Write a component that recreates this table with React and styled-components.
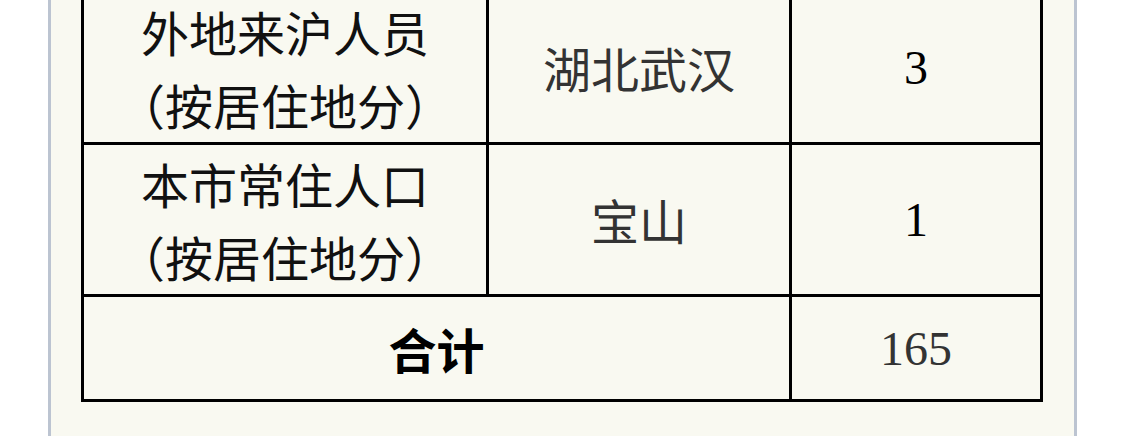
import React from "react";
import styled, { createGlobalStyle } from "styled-components";

const GlobalStyle = createGlobalStyle`
  html, body {
    margin: 0;
    padding: 0;
    background: #ffffff;
    overflow: hidden;
  }
  body {
    font-family: "Noto Sans CJK SC", "Noto Sans", sans-serif;
  }
`;

const Panel = styled.div`
  box-sizing: border-box;
  width: 1029px;
  margin: -40px 0 0 48px;
  padding: 30px 31px 60px 30px;
  background: #f9f9f1;
  border-left: 3px solid #bcc4d1;
  border-right: 3px solid #bcc4d1;
`;

const Grid = styled.div`
  display: grid;
  grid-template-columns: 405px 303px 251px;
  grid-auto-rows: auto;
  width: 962px;
  box-sizing: border-box;
  border-left: 3px solid #000;
  border-top: 3px solid #000;
`;

const Cell = styled.div`
  box-sizing: border-box;
  height: ${(p) => p.$h}px;
  grid-column: span ${(p) => p.$span || 1};
  border-right: 3px solid #000;
  border-bottom: 3px solid #000;
  display: flex;
  align-items: center;
  justify-content: center;
  text-align: center;
  font-size: 48px;
  line-height: 73px;
  color: ${(p) => p.$color || "#111"};
  font-weight: ${(p) => (p.$bold ? 700 : 400)};
  font-family: ${(p) =>
    p.$serif
      ? `"Liberation Serif", "Times New Roman", serif`
      : `"Noto Sans CJK SC", "Noto Sans", sans-serif`};
`;

const rows = [
  {
    category: ["外地来沪人员", "（按居住地分）"],
    place: "湖北武汉",
    count: "3",
    h: 152,
  },
  {
    category: ["本市常住人口", "（按居住地分）"],
    place: "宝山",
    count: "1",
    h: 152,
  },
];

export default function App() {
  return (
    <>
      <GlobalStyle />
      <Panel>
        <Grid>
          {rows.map((r, i) => (
            <React.Fragment key={i}>
              <Cell $h={r.h}>
                <span>
                  {r.category[0]}
                  <br />
                  {r.category[1]}
                </span>
              </Cell>
              <Cell $h={r.h} $color="#333">
                {r.place}
              </Cell>
              <Cell $h={r.h} $serif $color="#000">
                {r.count}
              </Cell>
            </React.Fragment>
          ))}
          <Cell $h={105} $span={2} $bold $color="#000">
            合计
          </Cell>
          <Cell $h={105} $serif $color="#333">
            165
          </Cell>
        </Grid>
      </Panel>
    </>
  );
}
